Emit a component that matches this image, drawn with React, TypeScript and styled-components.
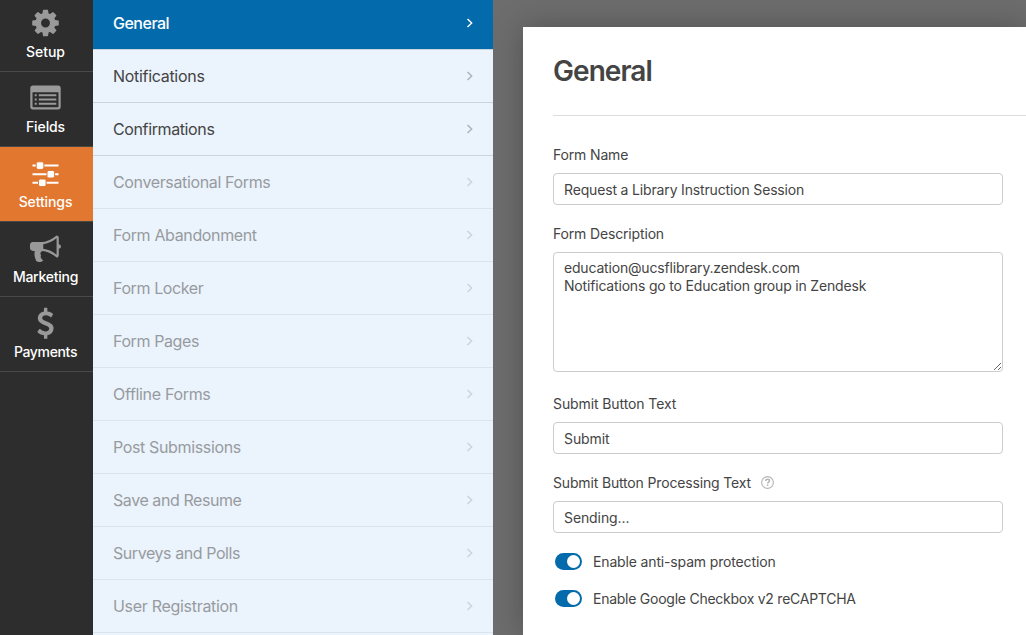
import React from "react";
import styled, { createGlobalStyle } from "styled-components";

const GlobalStyle = createGlobalStyle`
  *, *::before, *::after { box-sizing: border-box; }
  html, body { margin: 0; padding: 0; overflow: hidden; }
  body { font-family: Inter, "Liberation Sans", sans-serif; color: #444; font-size: 14px; }
`;

const Builder = styled.div`
  display: flex;
  width: 100vw;
  height: 100vh;
  overflow: hidden;
  background: #6d6d6d;
`;

const Rail = styled.nav`
  flex: 0 0 93px;
  display: flex;
  flex-direction: column;
  background: #2d2d2d;
  margin-top: -3px;
`;

const RailItem = styled.a<{ $active?: boolean }>`
  flex: 0 0 75px;
  display: flex;
  flex-direction: column;
  align-items: center;
  padding: 10px 2px 0 0;
  border-bottom: 1px solid #484848;
  background: ${(p) => (p.$active ? "#e27730" : "transparent")};
  color: ${(p) => (p.$active ? "#fff" : "#999")};
`;

const RailIcon = styled.svg`
  width: 31px;
  height: 32px;
  fill: currentColor;
`;

const RailLabel = styled.span<{ $spacing: number }>`
  margin-top: 4px;
  color: #fff;
  font-size: 14px;
  line-height: 18px;
  font-weight: 500;
  letter-spacing: ${(p) => p.$spacing}px;
`;

const Sidebar = styled.aside`
  flex: 0 0 400px;
  display: flex;
  flex-direction: column;
  background: #ebf3fc;
  margin-top: -3px;
`;

const SectionLink = styled.a<{ $state: "active" | "normal" | "locked" }>`
  flex: 0 0 53px;
  display: flex;
  align-items: center;
  justify-content: space-between;
  padding: 0 19px 0 20px;
  border-bottom: 1px solid ${(p) => (p.$state === "locked" ? "#dae4ef" : "#cbd4de")};
  background: ${(p) => (p.$state === "active" ? "#036aab" : "transparent")};
  background-clip: padding-box;
  color: ${(p) => ({ active: "#fff", normal: "#444", locked: "#979b9f" })[p.$state]};
  font-size: 16px;

  svg {
    width: 8px;
    height: 10px;
    fill: none;
    stroke: ${(p) => ({ active: "#fff", normal: "#abb2b9", locked: "#cbd2da" })[p.$state]};
    stroke-width: 1.4;
  }
`;

const SectionName = styled.span<{ $spacing: number; $medium: boolean }>`
  font-weight: ${(p) => (p.$medium ? 500 : 400)};
  letter-spacing: ${(p) => p.$spacing}px;
`;

const Panel = styled.main`
  flex: 1;
  margin: 27px 0 0 30px;
  padding: 25px 0 0 30px;
  background: #fff;
  box-shadow: 0 0 30px rgba(0, 0, 0, 0.25);
`;

const Title = styled.h1`
  margin: 0;
  height: 64px;
  border-bottom: 1px solid #ddd;
  font-size: 28px;
  line-height: 38px;
  font-weight: 600;
  letter-spacing: -0.95px;
`;

const Form = styled.form`
  width: 450px;
  padding-top: 30px;
`;

const Field = styled.div<{ $gap?: number }>`
  margin-bottom: ${(p) => p.$gap ?? 20}px;
`;

const Label = styled.label<{ $spacing?: number }>`
  display: flex;
  align-items: center;
  height: 16px;
  margin-bottom: 11px;
  font-size: 14px;
  letter-spacing: ${(p) => p.$spacing ?? -0.16}px;

  svg {
    margin: 1px 0 0 10px;
  }
`;

const TextInput = styled.input<{ $spacing?: number }>`
  display: block;
  width: 100%;
  height: 32px;
  padding: 0 10px;
  border: 1px solid #ccc;
  border-radius: 4px;
  background: #fff;
  color: #444;
  font: 14px Inter, "Liberation Sans", sans-serif;
  letter-spacing: ${(p) => p.$spacing ?? -0.1}px;
  outline: none;
`;

const TextArea = styled.textarea`
  display: block;
  width: 100%;
  height: 120px;
  padding: 6px 10px;
  border: 1px solid #ccc;
  border-radius: 4px;
  background: #fff;
  color: #444;
  font: 14px/18px Inter, "Liberation Sans", sans-serif;
  letter-spacing: -0.18px;
  outline: none;
  resize: vertical;
`;

const ToggleRow = styled.div<{ $spacing: number }>`
  display: flex;
  align-items: center;
  gap: 11px;
  height: 17px;
  margin: 0 0 20px 2px;
  font-size: 14px;
  letter-spacing: ${(p) => p.$spacing}px;
`;

const Switch = styled.span`
  display: flex;
  justify-content: flex-end;
  width: 27px;
  height: 17px;
  padding: 2px;
  border-radius: 9px;
  background: #036aab;

  &::after {
    content: "";
    width: 13px;
    height: 13px;
    border-radius: 50%;
    background: #fff;
  }
`;

const Gear = () => (
  <RailIcon viewBox="0 0 1792 1792">
    <path d="M1152 896q0-106-75-181t-181-75-181 75-75 181 75 181 181 75 181-75 75-181zm512-109v222q0 12-8 23t-20 13l-185 28q-19 54-39 91 35 50 107 138 10 12 10 25t-9 23q-27 37-99 108t-94 71q-12 0-26-9l-138-108q-44 23-91 38-16 136-29 186-7 28-36 28h-222q-14 0-24.5-8.5t-11.5-21.5l-28-184q-49-16-90-37l-141 107q-10 9-25 9-14 0-25-11-126-114-165-168-7-10-7-23 0-12 8-23 15-21 51-66.5t54-70.5q-27-50-41-99l-183-27q-13-2-21-12.5t-8-23.5v-222q0-12 8-23t19-13l186-28q14-46 39-92-40-57-107-138-10-12-10-24 0-10 9-23 26-36 98.5-107.5t94.5-71.5q13 0 26 10l138 107q44-23 91-38 16-136 29-186 7-28 36-28h222q14 0 24.5 8.5t11.5 21.5l28 184q49 16 90 37l142-107q9-9 24-9 13 0 25 10 129 119 165 170 7 8 7 22 0 12-8 23-15 21-51 66.5t-54 70.5q26 50 41 98l183 28q13 2 21 12.5t8 23.5z" />
  </RailIcon>
);

const ListBox = () => (
  <RailIcon viewBox="0 0 31 32">
    <path
      fillRule="evenodd"
      d="M3 3.5h25a2.7 2.7 0 0 1 2.7 2.7v18.6a2.7 2.7 0 0 1-2.7 2.7H3a2.7 2.7 0 0 1-2.7-2.7V6.2A2.7 2.7 0 0 1 3 3.5zM2.5 10.3v14.2q0 .8.8.8h24.4q.8 0 .8-.8V10.3z"
    />
    <path d="M4.7 12.3h2v2h-2zM4.7 16.5h2v2h-2zM4.7 20.7h2v2h-2zM8.8 12.3h17.500v2H8.8zM8.8 16.5h17.500v2H8.8zM8.8 20.7h17.500v2H8.8z" />
  </RailIcon>
);

const Sliders = () => (
  <RailIcon viewBox="0 0 31 32">
    <path d="M2.5 7.600h26v2h-26zM2.5 16.200h26v2h-26zM2.5 24.800h26v2h-26z" />
    <g stroke="#e27730" strokeWidth="1">
      <rect x="6.2" y="4.800" width="7.600" height="7.600" rx="1.800" />
      <rect x="17" y="13.400" width="7.600" height="7.600" rx="1.800" />
      <rect x="8.500" y="22" width="7.600" height="7.600" rx="1.800" />
    </g>
  </RailIcon>
);

const Bullhorn = () => (
  <RailIcon viewBox="0 -40 1792 1792">
    <path d="M1664 640q53 0 90.5 37.5t37.5 90.5-37.5 90.5-90.5 37.5v384q0 52-38 90t-90 38q-417-347-812-380-58 19-91 66t-31 100.5 40 92.5q-20 33-23 65.5t6 58 33.5 55 48 50 61.5 50.500q-29 58-111.500 83t-168.500 11.500-132-55.500q-7-23-29.500-87.500t-32-94.500-23-89-15-101 3.500-98.500 22-110.500h-122q-66 0-113-47t-47-113v-192q0-66 47-113t113-47h480q435 0 896-384 52 0 90 38t38 90v384zm-128 604v-954q-394 302-768 343v270q377 42 768 341z" />
  </RailIcon>
);

const Dollar = () => (
  <RailIcon viewBox="0 -20 1792 1792">
    <path d="M1362 1185q0 153-99.500 263.500t-258.500 136.500v175q0 14-9 23t-23 9h-135q-13 0-22.500-9.500t-9.500-22.500v-175q-66-9-127.500-31t-101.500-44.500-74-48-46.500-37.500-17.500-18q-17-21-2-41l103-135q7-10 23-12 15-2 24 9l2 2q113 99 243 125 37 8 74 8 81 0 142.500-43t61.500-122q0-28-15-53t-33.500-42-58.500-37.500-66-32-80-32.500q-39-16-61.500-25t-61.500-26.500-62.500-31-56.500-35.500-53.500-42.500-43.500-49-35.500-58-21-66.500-8.500-78q0-138 98-242t255-134v-180q0-13 9.500-22.500t22.500-9.500h135q14 0 23 9t9 23v176q57 6 110.500 23t87 33.500 63.500 37.500 39 29 15 14q17 18 5 38l-81 146q-8 15-23 16-14 3-27-7-3-3-14.500-12t-39-26.500-58.500-32-74.500-26-85.500-11.500q-95 0-155 43t-60 111q0 26 8.500 48t29.500 41.500 39.500 33 56 31 60.500 27 70 27.500q53 20 81 31.500t76 35 75.500 42.500 62 50 53 63.500 31.500 76.500 13 94z" />
  </RailIcon>
);

const Chevron = () => (
  <svg viewBox="0 0 8 10">
    <path d="M1.5 .9 5.7 5 1.5 9.100" />
  </svg>
);

const HelpIcon = () => (
  <svg width="13" height="13" viewBox="0 0 13 13" fill="none" stroke="#b5b5b5">
    <circle cx="6.5" cy="6.5" r="5.9" strokeWidth="1.100" />
    <path d="M4.6 5c.1-1.1.9-1.7 2-1.7s1.9.6 1.9 1.5c0 1.200-1.9 1.300-1.9 2.700M6.600 8.600v1.400" strokeWidth="1.500" />
  </svg>
);

const railItems = [
  { name: "Setup", Icon: Gear, spacing: -0.05 },
  { name: "Fields", Icon: ListBox, spacing: -0.1 },
  { name: "Settings", Icon: Sliders, spacing: -0.12, active: true },
  { name: "Marketing", Icon: Bullhorn, spacing: -0.25 },
  { name: "Payments", Icon: Dollar, spacing: -0.35 },
];

const sections: { name: string; state: "active" | "normal" | "locked"; spacing: number }[] = [
  { name: "General", state: "active", spacing: -0.5 },
  { name: "Notifications", state: "normal", spacing: -0.3 },
  { name: "Confirmations", state: "normal", spacing: -0.38 },
  { name: "Conversational Forms", state: "locked", spacing: -0.36 },
  { name: "Form Abandonment", state: "locked", spacing: -0.36 },
  { name: "Form Locker", state: "locked", spacing: -0.4 },
  { name: "Form Pages", state: "locked", spacing: -0.4 },
  { name: "Offline Forms", state: "locked", spacing: -0.32 },
  { name: "Post Submissions", state: "locked", spacing: -0.36 },
  { name: "Save and Resume", state: "locked", spacing: -0.43 },
  { name: "Surveys and Polls", state: "locked", spacing: -0.43 },
  { name: "User Registration", state: "locked", spacing: -0.3 },
  { name: "", state: "locked", spacing: 0 },
];

export default function App() {
  return (
    <>
      <GlobalStyle />
      <Builder>
        <Rail>
          {railItems.map(({ name, Icon, spacing, active }) => (
            <RailItem key={name} $active={active}>
              <Icon />
              <RailLabel $spacing={spacing}>{name}</RailLabel>
            </RailItem>
          ))}
        </Rail>
        <Sidebar>
          {sections.map(({ name, state, spacing }) => (
            <SectionLink key={name} $state={state}>
              <SectionName $spacing={spacing} $medium={state === "active"}>
                {name}
              </SectionName>
              {name && <Chevron />}
            </SectionLink>
          ))}
        </Sidebar>
        <Panel>
          <Title>General</Title>
          <Form>
            <Field>
              <Label>Form Name</Label>
              <TextInput $spacing={-0.16} defaultValue="Request a Library Instruction Session" />
            </Field>
            <Field $gap={23}>
              <Label>Form Description</Label>
              <TextArea
                spellCheck={false}
                defaultValue={"education@ucsflibrary.zendesk.com\nNotifications go to Education group in Zendesk"}
              />
            </Field>
            <Field>
              <Label $spacing={-0.1}>Submit Button Text</Label>
              <TextInput defaultValue="Submit" />
            </Field>
            <Field>
              <Label>
                Submit Button Processing Text
                <HelpIcon />
              </Label>
              <TextInput defaultValue="Sending..." />
            </Field>
            <ToggleRow $spacing={-0.15}>
              <Switch />
              Enable anti-spam protection
            </ToggleRow>
            <ToggleRow $spacing={-0.25}>
              <Switch />
              Enable Google Checkbox v2 reCAPTCHA
            </ToggleRow>
          </Form>
        </Panel>
      </Builder>
    </>
  );
}
